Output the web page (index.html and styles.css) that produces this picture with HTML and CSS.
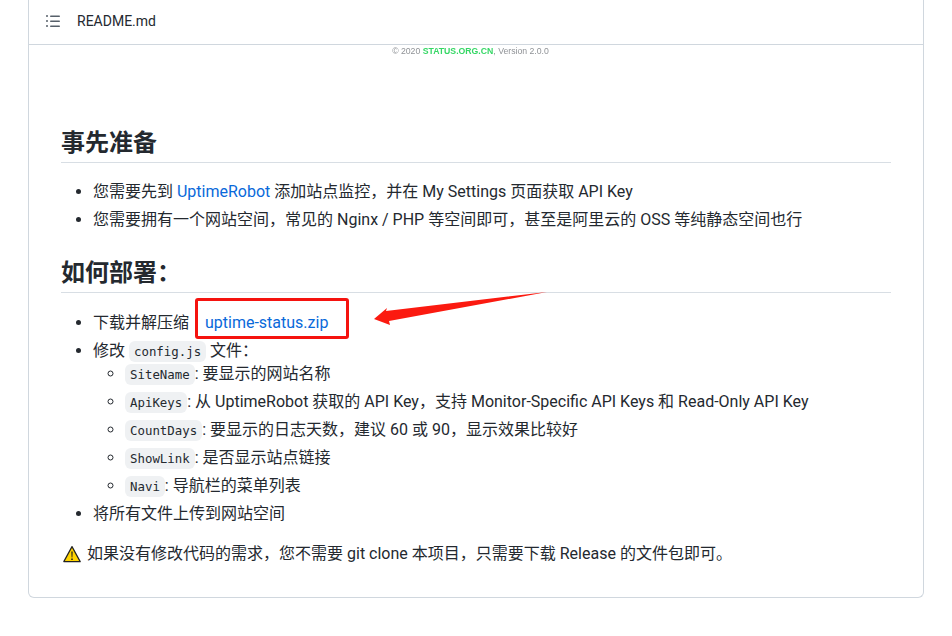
FILE: index.html
```html
<!DOCTYPE html>
<html lang="zh">
<head>
<meta charset="utf-8">
<title>README.md</title>
<link rel="stylesheet" href="styles.css">
</head>
<body>
<main class="box">
  <header class="box-head">
    <svg class="toc" viewBox="0 0 16 16" width="16" height="16"><path fill="#57606a" d="M2 4a1 1 0 1 0 0-2 1 1 0 0 0 0 2Zm3.75-1.5a.75.75 0 0 0 0 1.5h8.5a.75.75 0 0 0 0-1.5h-8.5Zm0 5a.75.75 0 0 0 0 1.5h8.5a.75.75 0 0 0 0-1.5h-8.5Zm0 5a.75.75 0 0 0 0 1.5h8.5a.75.75 0 0 0 0-1.5h-8.5ZM3 8a1 1 0 1 1-2 0 1 1 0 0 1 2 0Zm-1 6a1 1 0 1 0 0-2 1 1 0 0 0 0 2Z"/></svg>
    <span class="file-name">README.md</span>
  </header>
  <article class="readme">
    <p class="credit">© 2020 <b>STATUS.ORG.CN</b>, Version 2.0.0</p>
    <h2 class="first">事先准备</h2>
    <ul>
      <li>您需要先到 <a href="#">UptimeRobot</a> 添加站点监控<span class="punct">，</span>并在 My Settings 页面获取 API Key</li>
      <li>您需要拥有一个网站空间<span class="punct">，</span>常见的 Nginx / PHP 等空间即可<span class="punct">，</span>甚至是阿里云的 OSS 等纯静态空间也行</li>
    </ul>
    <h2>如何部署：</h2>
    <ul>
      <li>下载并解压缩 <a class="zip" href="#">uptime-status.zip</a></li>
      <li>修改 <code>config.js</code> 文件<span class="punct">：</span>
        <ul class="sub">
          <li><code>SiteName</code>: 要显示的网站名称</li>
          <li><code>ApiKeys</code>: 从 UptimeRobot 获取的 API Key<span class="punct">，</span>支持 Monitor-Specific API Keys 和 Read-Only API Key</li>
          <li><code>CountDays</code>: 要显示的日志天数<span class="punct">，</span>建议 60 或 90<span class="punct">，</span>显示效果比较好</li>
          <li><code>ShowLink</code>: 是否显示站点链接</li>
          <li><code>Navi</code>: 导航栏的菜单列表</li>
        </ul>
      </li>
      <li>将所有文件上传到网站空间</li>
    </ul>
    <p class="note"><svg class="warn" viewBox="0 0 18 18" width="18" height="18"><path fill="#ffd400" stroke="#222" stroke-width="1.2" stroke-linejoin="round" d="M9 1.6 17.2 16.6H.8Z"/><path fill="#222" d="M8.3 6.5h1.4l-.3 6h-.8ZM8.2 13.4h1.6v1.5H8.2Z"/></svg><span>如果没有修改代码的需求<span class="punct">，</span>您不需要 git clone 本项目<span class="punct">，</span>只需要下载 Release 的文件包即可。</span></p>
  </article>
</main>
<div class="mark-box"></div>
<svg class="mark-arrow" viewBox="0 0 180 40" width="180" height="40"><path fill="#fb1a10" d="M173 0 12 19 13 16 0 27 16 33 15 29Z"/></svg>
</body>
</html>
```
FILE: styles.css
```css
html, body { margin: 0; padding: 0; background: #fff; }
body {
  font-family: Roboto, "Noto Sans CJK SC", sans-serif;
  font-size: 16px;
  line-height: 28px;
  color: #24292f;
  height: 636px;
  overflow: hidden;
  position: relative;
}
.box {
  margin: 0 28px;
  width: 894px;
  height: 597px;
  border: 1px solid #d0d7de;
  border-top: 0;
  border-radius: 0 0 6px 6px;
}
.box-head {
  height: 45px;
  border-bottom: 1px solid #d0d7de;
  display: flex;
  align-items: center;
  gap: 16px;
  padding: 0 0 2px 16px;
  box-sizing: border-box;
}
.toc { flex: none; }
.file-name { font-size: 14px; color: #24292f; font-weight: 400; }
.readme { padding: 0 32px; }
.credit {
  margin: 0;
  padding-right: 11px;
  height: 13px;
  line-height: 13px;
  text-align: center;
  font-family: "Liberation Sans", sans-serif;
  font-size: 8.7px;
  color: #8f9296;
  filter: blur(0.35px);
}
.credit b { color: #35d765; }
h2 {
  margin: 19px 0 16px;
  font-size: 24px;
  line-height: 35px;
  height: 40px;
  box-sizing: border-box;
  font-weight: 700;
  color: #24292f;
  border-bottom: 1px solid #d8dee4;
  font-family: "Noto Sans CJK SC", sans-serif;
}
h2.first { margin: 65px 0 15px; }
ul { margin: 0; padding: 0 0 0 32px; }
ul.sub { margin-top: -5px; list-style-type: circle; }
a { color: #0969da; text-decoration: none; }
.zip { margin-left: 12px; }
.punct { font-family: "Noto Sans CJK TC", sans-serif; line-height: 1; }
code {
  font-family: "DejaVu Sans Mono", "Liberation Mono", monospace;
  font-size: 12.4px;
  line-height: 1;
  background: #eff1f3;
  border-radius: 6px;
  padding: 3px 5px;
}
.note { margin: 12px 0 0; display: flex; align-items: center; gap: 6px; }
.warn { flex: none; margin-left: 2px; }
.mark-box {
  position: absolute;
  left: 195px;
  top: 298px;
  width: 148px;
  height: 35px;
  border: 3px solid #f5130f;
  border-radius: 3px;
}
.mark-arrow { position: absolute; left: 374px; top: 292px; }
```
